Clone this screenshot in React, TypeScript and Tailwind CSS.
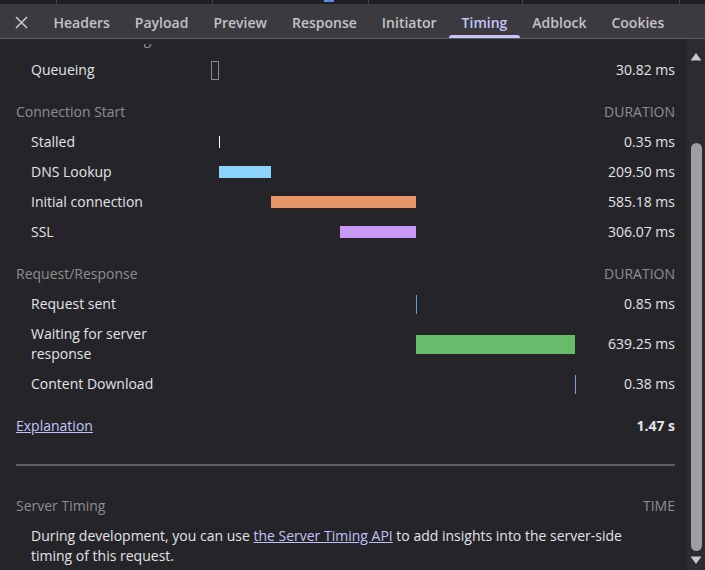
import React from "react";

type Bar = { left: number; width: number; color: string; height: number; outline?: boolean };

interface Row {
  label: string;
  value: string;
  bar: Bar;
}

const connection: Row[] = [
  { label: "Stalled", value: "0.35 ms", bar: { left: 8, width: 1, color: "#ffffff", height: 12 } },
  { label: "DNS Lookup", value: "209.50 ms", bar: { left: 8, width: 52, color: "#8cd3fb", height: 12 } },
  { label: "Initial connection", value: "585.18 ms", bar: { left: 60, width: 145, color: "#e9956a", height: 12 } },
  { label: "SSL", value: "306.07 ms", bar: { left: 129, width: 76, color: "#c798f7", height: 12 } },
];

const requestResponse: Row[] = [
  { label: "Request sent", value: "0.85 ms", bar: { left: 205, width: 1, color: "#4ea3d6", height: 19 } },
  { label: "Waiting for server response", value: "639.25 ms", bar: { left: 205, width: 159, color: "#67bb6a", height: 19 } },
  { label: "Content Download", value: "0.38 ms", bar: { left: 364, width: 1, color: "#7e9ce0", height: 19 } },
];

const tabs = ["Headers", "Payload", "Preview", "Response", "Initiator", "Timing", "Adblock", "Cookies"];

const TimingRow = ({ label, value, bar }: Row) => (
  <div className="flex items-center py-[5px] min-h-[30px]">
    <div className="w-[195px] shrink-0 pl-[15px]">
      <div className="w-[150px]">{label}</div>
    </div>
    <div className="w-[365px] shrink-0 flex items-center">
      <div
        className={bar.outline ? "border border-[#8a8a8e]" : ""}
        style={{
          marginLeft: bar.left,
          width: bar.width,
          height: bar.height,
          backgroundColor: bar.outline ? "transparent" : bar.color,
        }}
      />
    </div>
    <div className="flex-1 text-right">{value}</div>
  </div>
);

const SectionHeader = ({ title, right }: { title: string; right: string }) => (
  <div className="flex items-center justify-between h-[30px] text-[#8e8e92]">
    <span>{title}</span>
    <span>{right}</span>
  </div>
);

export default function App() {
  return (
    <div
      className="w-[705px] h-[570px] overflow-hidden flex flex-col bg-[#252529] text-[#e3e3e8] text-[14px] leading-5"
      style={{ fontFamily: '"Open Sans", "Noto Sans", sans-serif' }}
    >
      {/* row cut off above */}
      <div className="h-[4px] shrink-0 bg-[#1f1f22] relative">
        <div className="absolute left-[56px] top-0 h-full w-px bg-[#47474b]" />
        <div className="absolute left-[212px] top-0 h-full w-px bg-[#47474b]" />
        <div className="absolute left-[324px] top-0 h-[2px] w-[10px] bg-[#5b8def]" />
        <div className="absolute left-[368px] top-0 h-full w-px bg-[#47474b]" />
        <div className="absolute left-[522px] top-0 h-full w-px bg-[#47474b]" />
        <div className="absolute left-[679px] top-0 h-full w-px bg-[#47474b]" />
      </div>

      {/* tab bar */}
      <div className="h-[35px] shrink-0 flex items-stretch bg-[#3b3b3f] border-b border-[#5d5d61]">
        <div className="w-[41px] flex items-center justify-center pt-[3px]">
          <svg width="13" height="13" viewBox="0 0 13 13" className="ml-[1px]">
            <path d="M1 1 L12 12 M12 1 L1 12" stroke="#c6c6c9" strokeWidth="1.6" />
          </svg>
        </div>
        {tabs.map((t) => (
          <div
            key={t}
            className={`relative flex items-center pt-[3px] px-[12.5px] font-semibold text-[14px] ${
              t === "Timing" ? "text-[#c4c6fb]" : "text-[#c3c3c6]"
            }`}
          >
            {t}
            {t === "Timing" && (
              <div className="absolute left-0 right-0 bottom-0 h-[3px] rounded-t-[3px] bg-[#c4c6fb]" />
            )}
          </div>
        ))}
      </div>

      <div className="flex-1 flex min-h-0">
        <div className="flex-1 overflow-hidden pl-[16px] pr-[12px]">
          {/* header scrolled away, only its descender peeks out */}
          <div className="h-[16px] pt-[5px]">
            <div className="h-[11px] overflow-hidden">
              <div className="mt-[-15px] flex justify-between text-[#8e8e92]">
                <span>Resource Scheduling</span>
                <span>DURATION</span>
              </div>
            </div>
          </div>

          <TimingRow
            label="Queueing"
            value="30.82 ms"
            bar={{ left: 0, width: 8, color: "", height: 19, outline: true }}
          />

          <div className="mt-[12px]">
            <SectionHeader title="Connection Start" right="DURATION" />
            {connection.map((r) => (
              <TimingRow key={r.label} {...r} />
            ))}
          </div>

          <div className="mt-[12px]">
            <SectionHeader title="Request/Response" right="DURATION" />
            {requestResponse.map((r) => (
              <TimingRow key={r.label} {...r} />
            ))}
          </div>

          <div className="mt-[12px] flex items-center justify-between h-[30px]">
            <a className="underline text-[#c0c3fa] cursor-pointer">Explanation</a>
            <span className="font-bold">1.47 s</span>
          </div>

          <div className="mt-[23px] h-[2px] bg-[#5f5f63]" />

          <div className="mt-[25px]">
            <SectionHeader title="Server Timing" right="TIME" />
            <p className="pl-[15px] pt-[5px] w-[625px]">
              During development, you can use{" "}
              <a className="underline text-[#c0c3fa] cursor-pointer">the Server Timing API</a> to add
              insights into the server-side timing of this request.
            </p>
          </div>
        </div>

        {/* scrollbar */}
        <div className="w-[18px] shrink-0 bg-[#2c2c30] flex flex-col items-center">
          <svg width="12" height="9" viewBox="0 0 12 9" className="mt-[13px]">
            <path d="M6 1 L11.5 8.5 L0.5 8.5 Z" fill="#c8c8cb" />
          </svg>
          <div className="mt-[82px] w-[11px] h-[408px] rounded-full bg-[#9f9fa2]" />
          <svg width="12" height="9" viewBox="0 0 12 9" className="mt-[5px]">
            <path d="M0.5 0.5 L11.5 0.5 L6 8 Z" fill="#c8c8cb" />
          </svg>
        </div>
      </div>
    </div>
  );
}
